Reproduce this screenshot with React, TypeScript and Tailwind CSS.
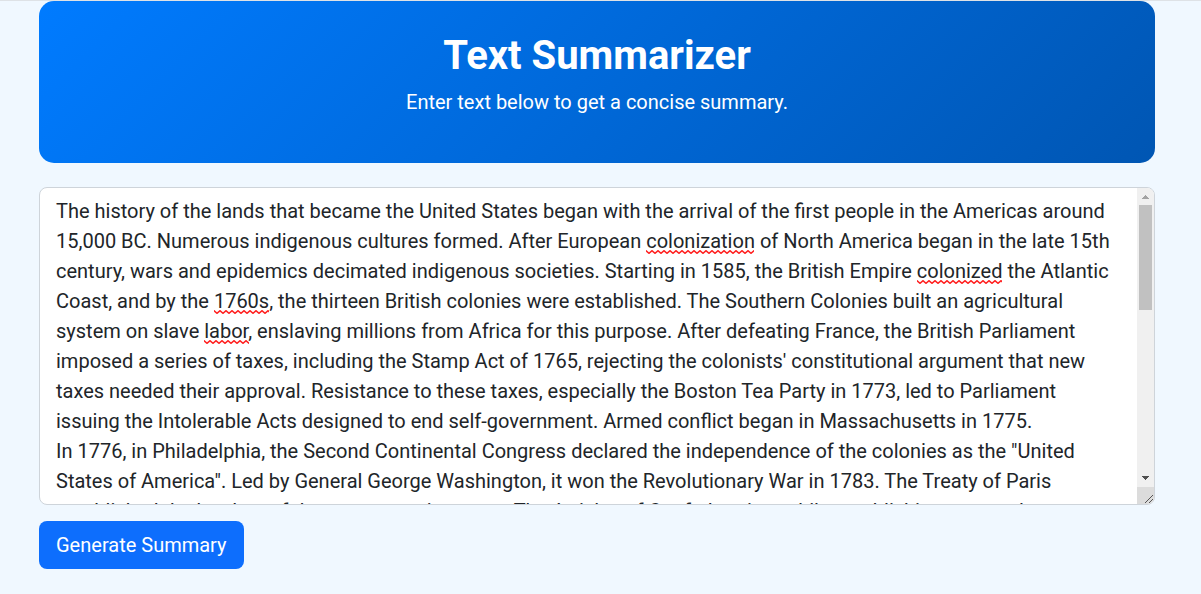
import { useEffect, useRef, useState } from "react";

const initialText = `The history of the lands that became the United States began with the arrival of the first people in the Americas around 15,000 BC. Numerous indigenous cultures formed. After European colonization of North America began in the late 15th century, wars and epidemics decimated indigenous societies. Starting in 1585, the British Empire colonized the Atlantic Coast, and by the 1760s, the thirteen British colonies were established. The Southern Colonies built an agricultural system on slave labor, enslaving millions from Africa for this purpose. After defeating France, the British Parliament imposed a series of taxes, including the Stamp Act of 1765, rejecting the colonists' constitutional argument that new taxes needed their approval. Resistance to these taxes, especially the Boston Tea Party in 1773, led to Parliament issuing the Intolerable Acts designed to end self-government. Armed conflict began in Massachusetts in 1775.
In 1776, in Philadelphia, the Second Continental Congress declared the independence of the colonies as the "United States of America". Led by General George Washington, it won the Revolutionary War in 1783. The Treaty of Paris established the borders of the new sovereign state. The Articles of Confederation, while establishing a central government, was ineffectual at providing stability. A convention wrote a new Constitution that was adopted in 1789, and a Bill of Rights was added in 1791 to guarantee inalienable rights. Washington, the first president, and his adviser Alexander Hamilton created a strong central government. The Louisiana Purchase in 1803 doubled the size of the country.
Encouraged by available, inexpensive land, and the notion of manifest destiny, the country expanded to the Pacific Coast. The resulting expansion of slavery was increasingly controversial, and fueled political and constitutional battles. After the election of Abraham Lincoln as president in 1860, the southern states seceded from the Union to form the pro-slavery Confederate States of America, and started the Civil War. In 1865, the Confederates were defeated, leading to the abolition of slavery. In the subsequent Reconstruction era, the national government gained an explicit duty to protect individual rights. White southern Democrats regained their political power in the South in 1877, often using paramilitary suppression of voting and Jim Crow laws to maintain white supremacy, as well as new state constitutions that legalized racial discrimination.
The United States became the world's leading industrial power in the 20th century, largely due to entrepreneurship, industrialization, and the arrival of millions of immigrant workers and farmers. A national railroad network was completed, and large-scale mines and factories were established.`;

function Squiggle({ className }: { className: string }) {
  return (
    <svg className={`absolute h-1 ${className}`} aria-hidden="true">
      <defs>
        <pattern id="wave" width="6" height="4" patternUnits="userSpaceOnUse">
          <path d="M-1.5 2 L0 0.7 L3 3.3 L6 0.7 L7.5 2" fill="none" stroke="#ff2020" strokeWidth="1.5" />
        </pattern>
      </defs>
      <rect width="100%" height="4" fill="url(#wave)" />
    </svg>
  );
}

export default function App() {
  const [text, setText] = useState(initialText);
  const [scroll, setScroll] = useState({ top: 0, view: 316, full: 796 });
  const area = useRef<HTMLTextAreaElement>(null);

  const measure = () => {
    const el = area.current;
    if (el) setScroll({ top: el.scrollTop, view: el.clientHeight, full: el.scrollHeight });
  };

  useEffect(() => {
    measure();
    window.addEventListener("resize", measure);
    return () => window.removeEventListener("resize", measure);
  }, [text]);

  const scrollBy = (amount: number) => area.current?.scrollBy({ top: amount });
  const thumbHeight = `${(scroll.view / scroll.full) * 100}%`;
  const thumbOffset = `${(scroll.top / scroll.full) * 100}%`;

  return (
    <div className="min-h-screen border-t border-[#dee2e6] bg-[#f0f8ff] font-[Roboto,sans-serif] text-[#212529]">
      <main className="ml-[39px] mr-[46px]">
        <header className="mb-6 rounded-[15px] bg-[linear-gradient(135deg,#007bff,#0056b3)] px-8 pt-[31px] pb-[46px] text-center text-white">
          <h1 className="mb-[7px] text-[40px] leading-[48px] font-bold">Text Summarizer</h1>
          <p className="text-[20px] leading-[30px]">Enter text below to get a concise summary.</p>
        </header>
        <form onSubmit={(e) => e.preventDefault()}>
          <div className="mb-4 flex h-[318px] overflow-hidden rounded-lg border border-[#ced4da] bg-white">
            <div className="relative min-w-0 flex-1 overflow-hidden">
              <textarea
                ref={area}
                aria-label="Text to summarize"
                value={text}
                spellCheck={false}
                onChange={(e) => setText(e.target.value)}
                onScroll={measure}
                className="block h-full w-full resize-none overflow-y-auto px-4 py-2 text-[20px] leading-[30px] outline-none [scrollbar-width:none]"
              />
              {text === initialText && (
                <div className="pointer-events-none absolute inset-x-0 top-0" style={{ marginTop: -scroll.top }}>
                  <Squiggle className="top-[62px] left-[606px] w-[108px]" />
                  <Squiggle className="top-[92px] left-[877px] w-[85px]" />
                  <Squiggle className="top-[122px] left-[174px] w-[55px]" />
                  <Squiggle className="top-[152px] left-[164px] w-[45px]" />
                </div>
              )}
            </div>
            <div className="flex w-[17px] flex-col bg-[#f0f0f0]">
              <button type="button" tabIndex={-1} aria-label="Scroll up" onClick={() => scrollBy(-30)} className="flex h-[17px] items-center justify-center">
                <svg width="7" height="4" viewBox="0 0 7 4" fill="#a3a3a3" shapeRendering="crispEdges">
                  <path d="M3 0h1v1h1v1h1v1h1v1H0V3h1V2h1V1h1z" />
                </svg>
              </button>
              <div className="flex-1 px-0.5">
                <div style={{ height: thumbOffset }} />
                <div className="bg-[#c1c1c1]" style={{ height: thumbHeight }} />
              </div>
              <button type="button" tabIndex={-1} aria-label="Scroll down" onClick={() => scrollBy(30)} className="flex h-[17px] items-start justify-center pt-1.5">
                <svg width="7" height="4" viewBox="0 0 7 4" fill="#505050" shapeRendering="crispEdges">
                  <path d="M0 0h7v1H6v1H5v1H4v1H3V3H2V2H1V1H0z" />
                </svg>
              </button>
              <div className="flex h-[17px] items-end justify-end bg-[#dcdcdc] p-px">
                <svg width="8" height="8" viewBox="0 0 8 8" stroke="#555" fill="none" shapeRendering="crispEdges">
                  <path d="M0 8L8 0M4 8L8 4" />
                </svg>
              </div>
            </div>
          </div>
          <button type="submit" className="rounded-lg bg-[#0d6efd] px-[17px] py-[9px] text-[20px] leading-[30px] text-white">
            Generate Summary
          </button>
        </form>
      </main>
    </div>
  );
}
